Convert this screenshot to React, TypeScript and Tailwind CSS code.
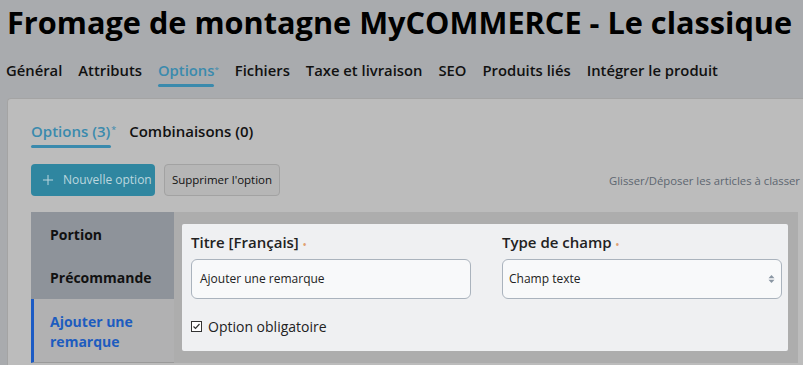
import { Plus } from "lucide-react";

const navItems = [
  { name: "Général" },
  { name: "Attributs" },
  { name: "Options", active: true },
  { name: "Fichiers" },
  { name: "Taxe et livraison" },
  { name: "SEO" },
  { name: "Produits liés" },
  { name: "Intégrer le produit" },
];

export default function App() {
  return (
    <div
      className="relative h-[365px] w-[803px] overflow-hidden bg-[#a9abae] text-[#111]"
      style={{ fontFamily: '"Open Sans", "Noto Sans", sans-serif' }}
    >
      {/* Title */}
      <h1 className="whitespace-nowrap pl-[7px] pt-[3px] text-[30.7px] font-bold leading-[38px] text-black">
        Fromage de montagne MyCOMMERCE - Le classique
      </h1>

      {/* Main tabs */}
      <nav className="mt-[19px] flex items-start gap-[16px] pl-[6px] text-[14.8px] font-semibold">
        {navItems.map((item) => (
          <div key={item.name} className="flex flex-col">
            <span
              className={`whitespace-nowrap leading-[20px] ${
                item.active ? "text-[#3a8aad]" : "text-[#111]"
              }`}
            >
              {item.name}
              {item.active && (
                <sup className="text-[8px] font-normal text-[#3a8aad]">*</sup>
              )}
            </span>
            <span
              className={`mt-[4px] h-[3px] rounded ${
                item.active ? "mr-[5px] bg-[#3a8aad]" : "bg-transparent"
              }`}
            />
          </div>
        ))}
      </nav>

      {/* Card */}
      <div className="ml-[7px] mt-[11px] h-[300px] rounded-tl-[4px] border-l border-t border-[#a4a4a4] bg-[#bcbcbc] pl-[23px]">
        {/* Sub tabs */}
        <div className="flex items-start gap-[13px] pt-[22px] text-[15px] font-semibold">
          <div className="flex flex-col">
            <span className="leading-[20px] text-[#3a8aad]">
              Options (3)
              <sup className="ml-[1px] text-[9px] font-normal">*</sup>
            </span>
            <span className="mr-[5px] mt-[4px] h-[3px] rounded bg-[#3a8aad]" />
          </div>
          <span className="leading-[20px] text-[#111]">Combinaisons (0)</span>
        </div>

        {/* Actions */}
        <div className="mt-[16px] flex items-center pr-[3px]">
          <button className="flex h-[32px] w-[124px] items-center gap-[7px] rounded-[4px] bg-[#2f86a0] pl-[9px] text-[12px] text-[#bcd7df]">
            <Plus size={16} strokeWidth={1.5} />
            Nouvelle option
          </button>
          <button className="ml-[9px] h-[32px] w-[116px] rounded-[4px] border border-[#a2a2a2] bg-[#b6b6b6] text-[11.5px] text-[#111]">
            Supprimer l'option
          </button>
          <span className="ml-auto pt-[2px] text-[11.3px] text-[#5c6670]">
            Glisser/Déposer les articles à classer
          </span>
        </div>

        {/* Options body */}
        <div className="mt-[16px] flex">
          {/* Sidebar */}
          <div className="w-[143px] shrink-0 text-[14px] font-bold">
            <div className="flex h-[44px] items-center bg-[#8e939a] pl-[19px] text-[#111]">
              Portion
            </div>
            <div className="flex h-[43px] items-center bg-[#8e939a] pl-[19px] text-[#111]">
              Précommande
            </div>
            <div className="h-[64px] border-b border-l-[3px] border-b-[#9a9a9a] border-l-[#1c5bc4] bg-[#b1b1b2] pl-[16px] pt-[13px] leading-[20px] text-[#1d5cbf]">
              Ajouter une
              <br />
              remarque
            </div>
          </div>

          {/* Content */}
          <div className="mr-[5px] flex-1 bg-[#adadad] pl-[8px] pr-[10px] pt-[12px]">
            <div className="rounded-[2px] bg-[#eff0f2] pb-[14px] pl-[9px] pr-[6px] pt-[8px]">
              <div className="flex gap-[31px]">
                <div className="w-[280px]">
                  <label className="block text-[15px] font-semibold leading-[20px] text-[#222]">
                    Titre [Français]
                    <span className="ml-[4px] align-middle text-[10px] text-[#e0a070]">•</span>
                  </label>
                  <div className="mt-[5px] flex h-[40px] items-center rounded-[6px] border border-[#aab3bd] bg-[#f8f9fa] pl-[8px] text-[12px] text-[#222]">
                    Ajouter une remarque
                  </div>
                </div>
                <div className="w-[280px]">
                  <label className="block text-[15px] font-semibold leading-[20px] text-[#222]">
                    Type de champ
                    <span className="ml-[4px] align-middle text-[10px] text-[#e0a070]">•</span>
                  </label>
                  <div className="mt-[5px] flex h-[40px] items-center justify-between rounded-[6px] border border-[#aab3bd] bg-[#f8f9fa] pl-[6px] pr-[6px] text-[12px] text-[#222]">
                    Champ texte
                    <svg width="7" height="10" viewBox="0 0 7 10">
                      <path d="M3.5 1 L6.5 4.2 H0.5 Z" fill="#8a96a3" />
                      <path d="M3.5 9 L6.5 5.8 H0.5 Z" fill="#8a96a3" />
                    </svg>
                  </div>
                </div>
              </div>
              <div className="mt-[17px] flex items-center gap-[6px] text-[14px] text-[#222]">
                <span className="flex h-[11px] w-[11px] items-center justify-center border border-[#333] bg-white">
                  <svg width="9" height="9" viewBox="0 0 9 9">
                    <path d="M1.5 4.5 L3.5 6.5 L7.5 2" stroke="#333" strokeWidth="1.2" fill="none" />
                  </svg>
                </span>
                Option obligatoire
              </div>
            </div>
          </div>
        </div>
      </div>
    </div>
  );
}
